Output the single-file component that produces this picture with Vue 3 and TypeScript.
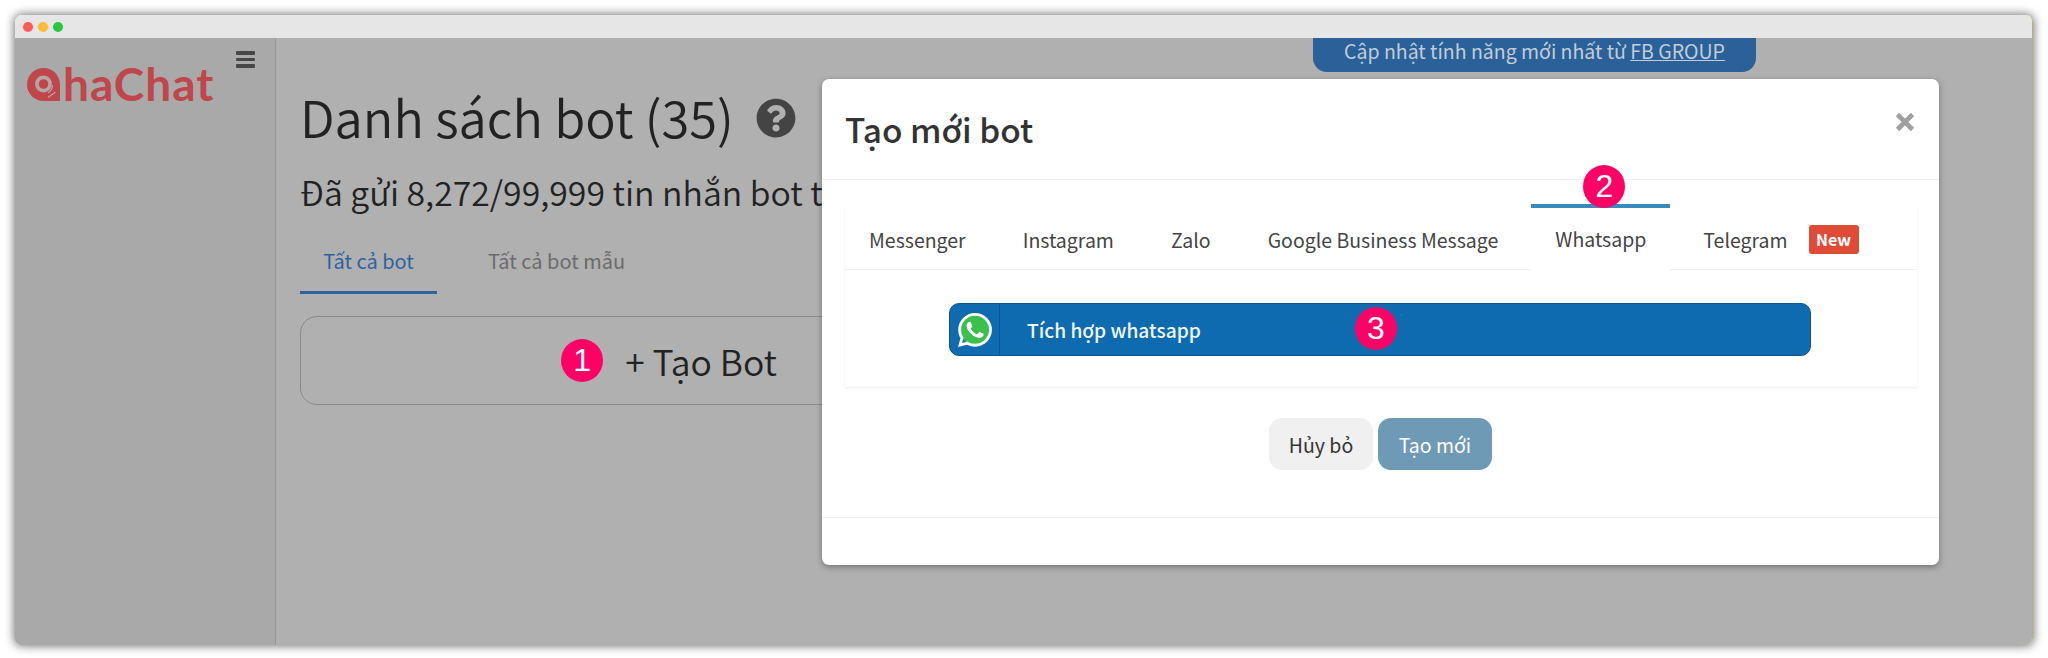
<script setup lang="ts">
const tabs = ['Messenger', 'Instagram', 'Zalo', 'Google Business Message', 'Whatsapp', 'Telegram']
const activeTab = 'Whatsapp'
</script>

<template>
  <div class="page">
    <div class="window">
      <div class="titlebar">
        <i class="dot red"></i><i class="dot amber"></i><i class="dot green"></i>
      </div>
      <div class="body">
        <aside class="sidebar">
          <div class="burger"><i></i><i></i><i></i></div>
          <div class="logo">
            <svg class="logo-mark" viewBox="0 0 33 33" aria-hidden="true">
              <path d="M16.5 0A16.5 16.5 0 1 0 16.5 33H33V16.5A16.5 16.5 0 0 0 16.5 0Z" fill="#c0464b" />
              <circle cx="16.5" cy="16" r="6.6" fill="none" stroke="#b5a5a5" stroke-width="3.6" />
              <path d="M21 29.5L28.5 24M25.5 17A9.5 9.5 0 0 1 21 25" stroke="#b5a5a5" stroke-width="1.2" fill="none" />
            </svg>
            <span class="logo-text">haChat</span>
          </div>
        </aside>
        <main class="main">
          <div class="banner-row">
            <div class="banner">Cập nhật tính năng mới nhất từ <u>FB GROUP</u></div>
          </div>
          <div class="heading">
            <h1>Danh sách bot (35)</h1>
            <svg class="help" viewBox="0 0 512 512" aria-hidden="true">
              <path fill="#444" d="M504 256c0 136.997-111.043 248-248 248S8 392.997 8 256C8 119.083 119.043 8 256 8s248 111.083 248 248zM262.655 90c-54.497 0-89.255 22.957-116.549 63.758-3.536 5.286-2.353 12.415 2.715 16.258l34.699 26.31c5.205 3.947 12.621 3.008 16.665-2.122 17.864-22.658 30.113-35.797 57.303-35.797 20.429 0 45.698 13.148 45.698 32.958 0 14.976-12.363 22.667-32.534 33.976C247.128 238.528 216 254.941 216 296v4c0 6.627 5.373 12 12 12h56c6.627 0 12-5.373 12-12v-1.333c0-28.462 83.186-29.647 83.186-106.667 0-58.002-60.165-102-116.531-102zM256 338c-25.365 0-46 20.635-46 46 0 25.364 20.635 46 46 46s46-20.636 46-46c0-25.365-20.635-46-46-46z" />
            </svg>
          </div>
          <p class="sent">Đã gửi 8,272/99,999 tin nhắn bot tháng này</p>
          <div class="page-tabs">
            <span class="page-tab on">Tất cả bot</span>
            <span class="page-tab">Tất cả bot mẫu</span>
          </div>
          <div class="create-box">
            <span class="step">1</span>
            <span class="create-label">+ Tạo Bot</span>
          </div>
        </main>
        <div class="overlay">
          <section class="modal">
            <header class="modal-head">
              <h2>Tạo mới bot</h2>
              <svg class="close" viewBox="0 0 20 20" aria-hidden="true">
                <path d="M2.5 2.5L17.5 17.5M17.5 2.5L2.5 17.5" stroke="#9f9f9f" stroke-width="4.6" fill="none" />
              </svg>
            </header>
            <div class="modal-body">
              <div class="card">
                <nav class="tabs">
                  <div v-for="t in tabs" :key="t" class="tab" :class="{ active: t === activeTab }">
                    <span>{{ t }}</span>
                    <b v-if="t === 'Telegram'" class="new">New</b>
                    <span v-if="t === activeTab" class="step step-two">2</span>
                  </div>
                </nav>
                <div class="panel">
                  <div class="wa-btn">
                    <span class="wa-icon">
                      <svg viewBox="0 0 24 24" aria-hidden="true">
                        <circle cx="12" cy="12" r="10.6" fill="#3cc04d" />
                        <path fill="#fff" d="M17.472 14.382c-.297-.149-1.758-.867-2.03-.967-.273-.099-.471-.148-.67.15-.197.297-.767.966-.94 1.164-.173.199-.347.223-.644.075-.297-.15-1.255-.463-2.39-1.475-.883-.788-1.48-1.761-1.653-2.059-.173-.297-.018-.458.13-.606.134-.133.298-.347.446-.52.149-.174.198-.298.298-.497.099-.198.05-.371-.025-.52-.075-.149-.669-1.612-.916-2.207-.242-.579-.487-.5-.669-.51-.173-.008-.371-.01-.57-.01-.198 0-.52.074-.792.372-.272.297-1.04 1.016-1.04 2.479 0 1.462 1.065 2.875 1.213 3.074.149.198 2.096 3.2 5.077 4.487.709.306 1.262.489 1.694.625.712.227 1.36.195 1.871.118.571-.085 1.758-.719 2.006-1.413.248-.694.248-1.289.173-1.413-.074-.124-.272-.198-.57-.347m-5.421 7.403h-.004a9.87 9.87 0 01-5.031-1.378l-.361-.214-3.741.982.998-3.648-.235-.374a9.86 9.86 0 01-1.51-5.26c.001-5.45 4.436-9.884 9.888-9.884 2.64 0 5.122 1.03 6.988 2.898a9.825 9.825 0 012.893 6.994c-.003 5.45-4.437 9.884-9.885 9.884m8.413-18.297A11.815 11.815 0 0012.05 0C5.495 0 .16 5.335.157 11.892c0 2.096.547 4.142 1.588 5.945L.057 24l6.305-1.654a11.882 11.882 0 005.683 1.448h.005c6.554 0 11.89-5.335 11.893-11.893a11.821 11.821 0 00-3.48-8.413z" />
                      </svg>
                    </span>
                    <span class="wa-label">Tích hợp whatsapp</span>
                    <span class="step step-three">3</span>
                  </div>
                </div>
              </div>
              <div class="actions">
                <button class="btn cancel" type="button">Hủy bỏ</button>
                <button class="btn create" type="button">Tạo mới</button>
              </div>
            </div>
            <footer class="modal-foot"></footer>
          </section>
        </div>
      </div>
    </div>
  </div>
</template>

<style>
html, body { margin: 0; background: #fff; }
</style>

<style scoped>
* { box-sizing: border-box; }
.page {
  width: 2048px;
  height: 658px;
  padding: 15px;
  background: #fff;
  overflow: hidden;
  font-family: "Noto Sans CJK SC", "Noto Sans", sans-serif;
  color: #222;
}
.window {
  width: 2018px;
  height: 630px;
  display: flex;
  flex-direction: column;
  border-radius: 7px;
  overflow: hidden;
  box-shadow: 0 0 10px 1px rgba(0, 0, 0, .55);
  border-right: 1px solid #b4b46e;
}
.titlebar {
  height: 23px;
  flex: none;
  display: flex;
  align-items: center;
  gap: 5px;
  padding-left: 8px;
  background: #e6e6e6;
}
.dot { width: 10px; height: 10px; border-radius: 50%; }
.red { background: #ff5a55; }
.amber { background: #ffba2e; }
.green { background: #28c840; }
.body { position: relative; flex: 1; display: flex; min-height: 0; background: #b0b0b0; }
.sidebar {
  width: 261px;
  flex: none;
  background: #a9a9a9;
  border-right: 1px solid #989898;
  padding: 13px 0 0 12px;
}
.burger { display: flex; flex-direction: column; gap: 3px; width: 19px; margin-left: 209px; }
.burger i { height: 3.5px; background: #474747; border-radius: 1px; }
.logo { display: flex; align-items: flex-end; height: 35px; margin-top: -2px; }
.logo-mark { width: 33px; height: 33px; flex: none; }
.logo-text {
  font-family: "Lato", sans-serif;
  font-weight: 700;
  font-size: 46px;
  line-height: 35px;
  letter-spacing: 1px;
  color: #c0464b;
  margin-left: 3px;
  height: 35px;
}
.main { flex: 1; min-width: 0; padding: 0 24px; }
.banner-row { display: flex; justify-content: flex-end; padding-right: 252px; }
.banner {
  width: 443px;
  height: 34px;
  background: #2a6199;
  color: #c3cdd8;
  border-radius: 0 0 14px 14px;
  text-align: center;
  font-size: 19.5px;
  line-height: 26px;
}
.heading { display: flex; align-items: center; gap: 22px; margin-top: 14px; height: 60px; }
h1 { margin: 0; font-weight: 350; font-size: 50.6px; line-height: 60px; white-space: nowrap; }
.help { width: 40px; height: 40px; flex: none; margin-top: 4px; }
.sent { margin: 24px 0 0; font-size: 33.8px; line-height: 44px; font-weight: 350; white-space: nowrap; }
.page-tabs { display: flex; gap: 27px; margin-top: 26px; height: 54px; }
.page-tab { padding: 0 24px; font-size: 20px; line-height: 41px; color: #6b6b6b; white-space: nowrap; }
.page-tab.on { width: 137px; padding: 0; text-align: center; color: #2f62a0; border-bottom: 3px solid #2f62a0; }
.create-box {
  width: 738px;
  height: 89px;
  margin-top: 22px;
  border: 1.5px solid #8a8a8a;
  border-radius: 17px;
  display: flex;
  align-items: center;
  justify-content: center;
}
.step {
  width: 42px;
  height: 43px;
  border-radius: 50%;
  background: #ff0066;
  color: #fff;
  display: flex;
  align-items: center;
  justify-content: center;
  font-family: "Liberation Sans", sans-serif;
  font-size: 32px;
  font-weight: 400;
  flex: none;
}
.create-label { margin-left: 22px; font-size: 35.5px; line-height: 44px; font-weight: 350; }
.overlay { position: absolute; inset: 0; padding: 41px 0 0 807px; }
.modal {
  width: 1117px;
  height: 486px;
  display: flex;
  flex-direction: column;
  background: #fff;
  border-radius: 7px;
  box-shadow: 0 2px 6px rgba(0, 0, 0, .35);
}
.modal-head {
  height: 101px;
  flex: none;
  border-bottom: 1px solid #f0f0f0;
  padding: 0 24px 0 23px;
  display: flex;
  justify-content: space-between;
}
h2 { margin: 25px 0 0; font-size: 33.4px; line-height: 50px; font-weight: 500; color: #333; }
.close { width: 20px; height: 20px; margin: 33px 0 0; }
.modal-body { flex: 1; padding: 28px 23px 0; }
.card { width: 1072px; box-shadow: 0 1px 2px rgba(0, 0, 0, .08); }
.tabs { height: 62px; display: flex; gap: 9px; border-bottom: 1px solid #eee; }
.tab {
  position: relative;
  padding: 1px 24px 0;
  height: 62px;
  display: flex;
  align-items: center;
  gap: 21px;
  font-size: 19.5px;
  color: #444;
  white-space: nowrap;
}
.tab.active { background: #fff; height: 63px; padding: 0 24px 3px; }
.tab.active::before {
  content: "";
  position: absolute;
  left: 0;
  right: 0;
  top: -4px;
  height: 4px;
  background: #3b8abd;
}
.step-two { position: absolute; left: 52px; top: -43px; z-index: 1; }
.new {
  width: 50px;
  height: 29px;
  border-radius: 3px;
  background: #e04b35;
  color: #fff;
  font-size: 16px;
  font-weight: 700;
  line-height: 29px;
  text-align: center;
}
.panel { height: 117px; padding: 33px 0 0 104px; }
.wa-btn {
  position: relative;
  width: 862px;
  height: 53px;
  display: flex;
  align-items: center;
  background: #0e6bb0;
  border: 1px solid #0b568f;
  border-radius: 10px;
  color: #fff;
}
.wa-icon {
  width: 50px;
  height: 100%;
  border-right: 1px solid #0b568f;
  display: flex;
  align-items: center;
  justify-content: center;
  flex: none;
}
.wa-icon svg { width: 34px; height: 34px; }
.wa-label { margin-left: 27px; font-size: 19.2px; font-weight: 500; color: #f2f7fb; }
.step-three { position: absolute; left: 405px; top: 3px; }
.actions { display: flex; justify-content: center; gap: 5px; margin-top: 31px; }
.btn {
  height: 52px;
  border: none;
  border-radius: 13px;
  font-family: inherit;
  font-size: 19.5px;
  padding: 0;
}
.cancel { width: 104px; background: #f0f0f0; color: #333; }
.create { width: 114px; background: #6f9ab6; color: #fff; }
.modal-foot { height: 48px; flex: none; border-top: 1px solid #f0f0f0; }
</style>
